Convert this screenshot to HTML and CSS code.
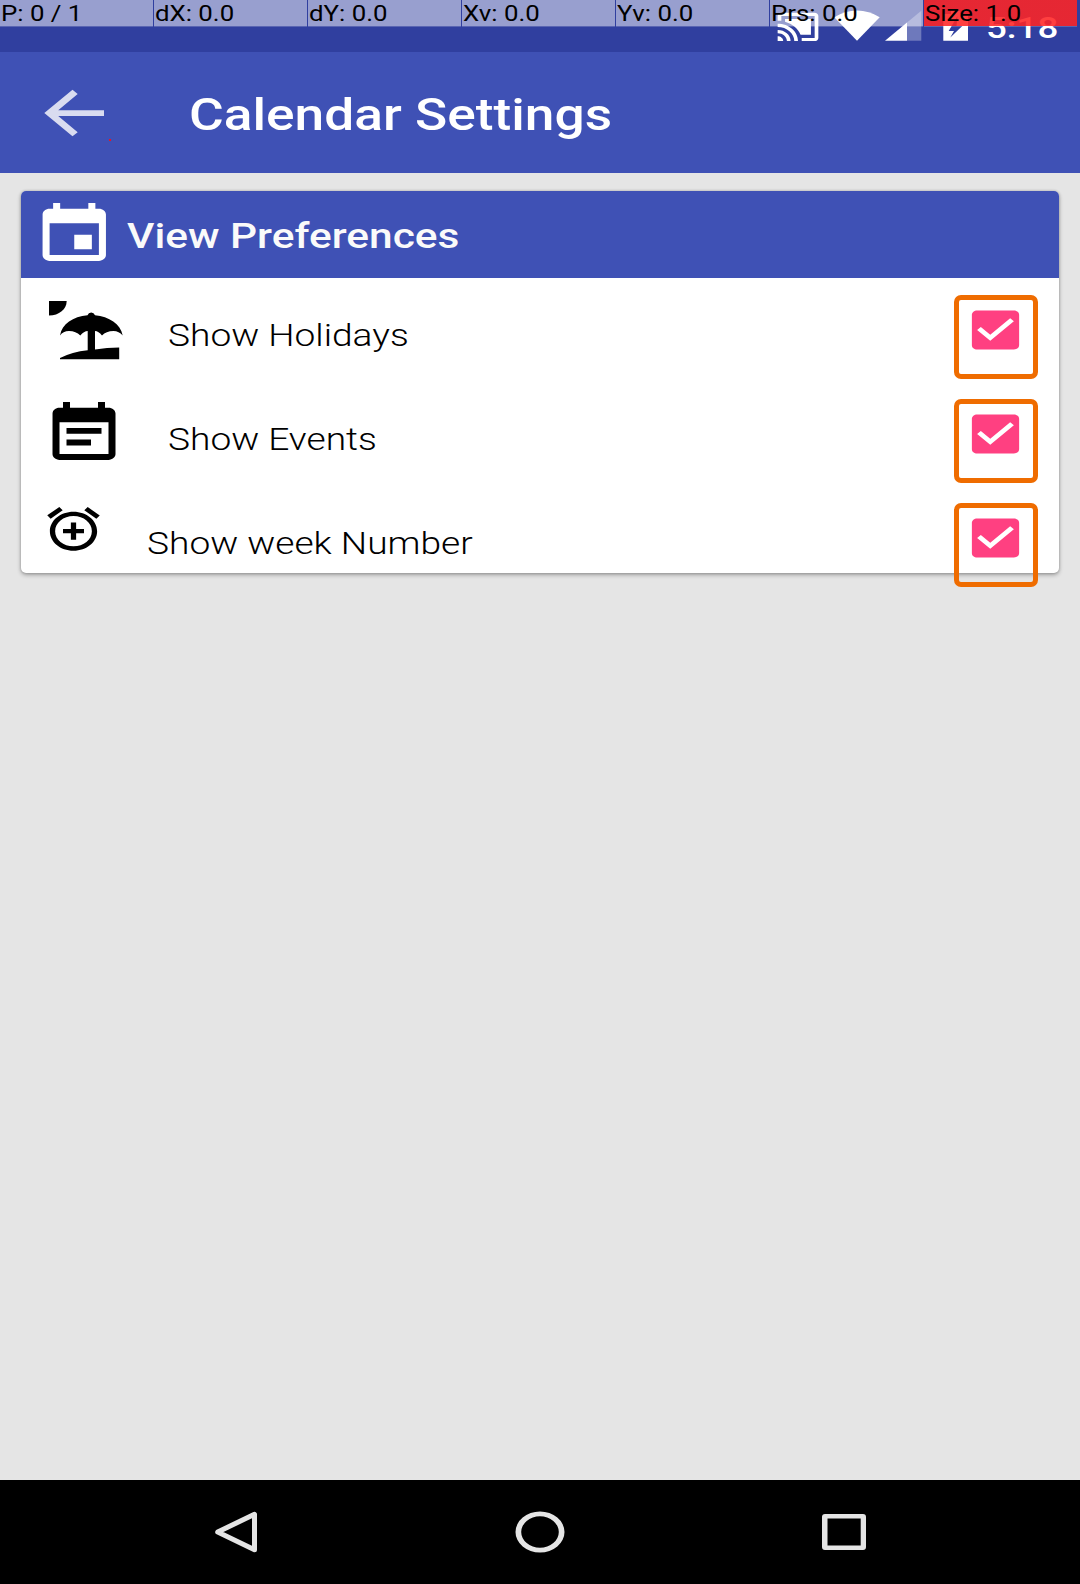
FILE: index.html
```html
<!DOCTYPE html>
<html lang="en">
<head>
<meta charset="utf-8">
<title>Calendar Settings</title>
<link rel="stylesheet" href="styles.css">
</head>
<body>
<div class="screen">
  <div class="status-bar">
    <svg class="status-icons" width="200" height="52" viewBox="774 0 200 52" fill="#fff">
      <path transform="translate(775.8 8.1) scale(1.85 1.57)" d="M1 18v3h3c0-1.66-1.34-3-3-3zm0-4v2c2.76 0 5 2.24 5 5h2c0-3.87-3.13-7-7-7zm18-7H5v1.63c3.96 1.28 7.09 4.41 8.37 8.37H19V7zM1 10v2c4.97 0 9 4.03 9 9h2c0-6.08-4.93-11-11-11zm20-7H3c-1.1 0-2 .9-2 2v3h2V5h18v14h-7v2h7c1.1 0 2-.9 2-2V5c0-1.1-.9-2-2-2z"/>
      <path d="M857 40.7 834.3 17.3Q845 10.6 857 10.6T879.7 17.3Z"/>
      <path opacity=".3" d="M907 22.5 921.3 10.7V40.7H907Z"/>
      <path d="M885 40.7 907 22.5V40.7Z"/>
      <path fill-rule="evenodd" d="M943.3 14H951V11H960V14H968V40.7H943.3ZM957.5 16 948.7 31H954L950.3 37.5 962.3 26H956.5Z"/>
    </svg>
    <span class="clock wide">5:18</span>
    <div class="pointer-info">
      <div class="cell"><span class="wide">P: 0 / 1</span></div>
      <div class="cell"><span class="wide">dX: 0.0</span></div>
      <div class="cell"><span class="wide">dY: 0.0</span></div>
      <div class="cell"><span class="wide">Xv: 0.0</span></div>
      <div class="cell"><span class="wide">Yv: 0.0</span></div>
      <div class="cell"><span class="wide">Prs: 0.0</span></div>
      <div class="cell size"><span class="wide">Size: 1.0</span></div>
    </div>
  </div>

  <header class="toolbar">
    <svg class="back" width="68" height="52" viewBox="44 87 68 52">
      <path fill="#d9dcf0" d="M44.3 113 72.5 89.8 77.7 94 58.2 110.2H104V115.9H58.2L77.7 132.2 72.5 136.3Z"/>
    </svg>
    <i class="touch-dot"></i>
    <h1 class="wide">Calendar Settings</h1>
  </header>

  <main class="content">
    <section class="card">
      <div class="card-head">
        <svg width="84.5" height="69.6" viewBox="0 0 24 24" preserveAspectRatio="none" fill="#fff"><path d="M17 12h-5v5h5v-5zM16 1v2H8V1H6v2H5c-1.11 0-1.99.9-1.99 2L3 19c0 1.1.89 2 2 2h14c1.1 0 2-.9 2-2V5c0-1.1-.9-2-2-2h-1V1h-2zm3 18H5V8h14v11z"/></svg>
        <h2 class="wide">View Preferences</h2>
      </div>
      <div class="row">
        <svg width="84" height="69" viewBox="42 295 84 69">
          <path d="M49 301H66.7C66.7 309 59 315.6 49 315.6Z"/>
          <path d="M60 335.500C62 324 73 316.500 87.500 315.300Q88.500 312.600 91.200 312.600T95 315.300C109 316.500 120.500 324 122.700 335.500Q119 331 113.500 331Q106 331 102 335.500Q98.500 331 95 331V349.500Q107 347.500 119.200 347.500V359.200H60V358Q72 352 87.700 350.300V331Q84 331 80.300 335.500Q76 331 69 331Q63 331 60 335.500Z"/>
        </svg>
        <span class="label wide">Show Holidays</span>
        <span class="check"><svg width="63" height="52" viewBox="0 0 24 24" preserveAspectRatio="none"><path d="M19 3H5c-1.11 0-2 .9-2 2v14c0 1.1.89 2 2 2h14c1.11 0 2-.9 2-2V5c0-1.1-.89-2-2-2zm-9 14l-5-5 1.41-1.41L10 14.17l7.59-7.59L19 8l-9 9z"/></svg></span>
      </div>
      <div class="row">
        <svg width="84" height="69.6" viewBox="0 0 24 24" preserveAspectRatio="none"><path d="M17 10H7v2h10v-2zm2-7h-1V1h-2v2H8V1H6v2H5c-1.11 0-1.99.9-1.99 2L3 19c0 1.1.89 2 2 2h14c1.1 0 2-.9 2-2V5c0-1.1-.9-2-2-2zm0 16H5V8h14v11zm-5-5H7v2h7v-2z"/></svg>
        <span class="label wide">Show Events</span>
        <span class="check"><svg width="63" height="52" viewBox="0 0 24 24" preserveAspectRatio="none"><path d="M19 3H5c-1.11 0-2 .9-2 2v14c0 1.1.89 2 2 2h14c1.11 0 2-.9 2-2V5c0-1.1-.89-2-2-2zm-9 14l-5-5 1.41-1.41L10 14.17l7.59-7.59L19 8l-9 9z"/></svg></span>
      </div>
      <div class="row">
        <svg width="63" height="52" viewBox="0 0 24 24" preserveAspectRatio="none"><path d="M7.88 3.39L6.6 1.86 2 5.71l1.29 1.53 4.59-3.85zM22 5.72l-4.6-3.86-1.29 1.53 4.6 3.86L22 5.72zM12 4c-4.97 0-9 4.03-9 9s4.02 9 9 9c4.97 0 9-4.03 9-9s-4.03-9-9-9zm0 16c-3.87 0-7-3.13-7-7s3.13-7 7-7 7 3.13 7 7-3.13 7-7 7zm1-11h-2v3H8v2h3v3h2v-3h3v-2h-3V9z"/></svg>
        <span class="label wide">Show week Number</span>
        <span class="check"><svg width="63" height="52" viewBox="0 0 24 24" preserveAspectRatio="none"><path d="M19 3H5c-1.11 0-2 .9-2 2v14c0 1.1.89 2 2 2h14c1.11 0 2-.9 2-2V5c0-1.1-.89-2-2-2zm-9 14l-5-5 1.41-1.41L10 14.17l7.59-7.59L19 8l-9 9z"/></svg></span>
      </div>
    </section>
  </main>

  <nav class="nav-bar">
    <svg width="48" height="44" viewBox="212 1510 48 44"><path d="M217.7 1532 254.5 1514.3V1549.7Z" stroke-width="5" stroke-linejoin="round"/></svg>
    <svg width="52" height="44" viewBox="0 0 52 44"><path fill-rule="evenodd" class="solid" d="M1.5 22a24.5 20.5 0 1 0 49 0a24.5 20.5 0 1 0-49 0ZM7.2 22a18.8 15.7 0 1 1 37.6 0a18.8 15.7 0 1 1-37.6 0Z"/></svg>
    <svg width="48" height="44" viewBox="820 1510 48 44"><path fill-rule="evenodd" class="solid" d="M825 1514H863Q866 1514 866 1517V1547Q866 1550 863 1550H825Q822 1550 822 1547V1517Q822 1514 825 1514ZM827.5 1518.5V1545.5H860.7V1518.5Z"/></svg>
  </nav>
</div>
</body>
</html>
```
FILE: styles.css
```css
* { box-sizing: border-box; }
body { margin: 0; font-family: Roboto, "Liberation Sans", sans-serif; }
svg { display: block; flex: none; }
h1, h2 { margin: 0; }

.screen {
  width: 1080px;
  height: 1584px;
  display: flex;
  flex-direction: column;
  background: #e5e5e5;
  overflow: hidden;
}

/* Glyphs are drawn wider than tall across the whole screen. */
.wide {
  display: inline-block;
  white-space: nowrap;
  transform: scaleX(1.212);
  transform-origin: left center;
}

.status-bar {
  position: relative;
  flex: none;
  height: 52px;
  display: flex;
  padding-left: 774px;
  background: #303f9f;
}
.clock {
  margin-left: 12px;
  padding-top: 10px;
  font-size: 30.3px;
  line-height: 36px;
  font-weight: 500;
  color: #fff;
}
.pointer-info {
  position: absolute;
  inset: 0 0 auto 0;
  height: 27px;
  display: flex;
  gap: 1px;
}
.cell {
  width: 153px;
  height: 26px;
  padding-left: 1px;
  background: rgba(255, 255, 255, .5);
  box-shadow: 0 1px rgba(255, 255, 255, .2);
  font-size: 21.5px;
  line-height: 28px;
  color: #000;
}
.cell .wide { transform: scaleX(1.2); }
.cell.size {
  background: linear-gradient(rgba(255, 0, 0, .753), rgba(255, 0, 0, .753)), rgba(255, 255, 255, .5);
}

.toolbar {
  flex: none;
  height: 121px;
  display: flex;
  align-items: center;
  padding-left: 44px;
  background: #3f51b5;
}
.touch-dot {
  width: 2px;
  height: 2px;
  margin: 54px 0 0 -3px;
  background: #f01020;
}
.toolbar h1 {
  margin-left: 78px;
  padding-top: 5px;
  font-size: 43.8px;
  line-height: 52px;
  font-weight: 500;
  color: #fff;
  transform: scaleX(1.216);
}

.content {
  flex: 1;
  padding: 18px 21px 0;
}
.card {
  height: 381.5px;
  border-radius: 5px;
  background: #fff;
  box-shadow: 0 2px 4px rgba(0, 0, 0, .3), 0 0 3px rgba(0, 0, 0, .2);
}
.card-head {
  height: 87px;
  display: flex;
  padding: 8.5px 0 0 10.5px;
  border-radius: 5px 5px 0 0;
  background: #3f51b5;
}
.card-head h2 {
  margin-left: 10.5px;
  padding-top: 14px;
  font-size: 34.8px;
  line-height: 44px;
  font-weight: 500;
  color: #fafafa;
  transform: scaleX(1.22);
}
.row {
  height: 87px;
  margin-top: 17px;
  padding: 0 10px 0 21px;
  display: flex;
}
.row svg { fill: #000; }
.label {
  margin-left: 42px;
  padding-top: 21px;
  font-size: 31.2px;
  line-height: 40px;
  font-weight: 300;
  color: #000;
  transform: scaleX(1.19);
}
.check {
  flex: none;
  width: 84px;
  height: 84px;
  margin-left: auto;
  margin-right: 11px;
  padding: 4px 0 0 5px;
  border: 5px solid #ef6c00;
  border-radius: 7px;
}
.row .check svg { fill: #ff4081; }

.nav-bar {
  flex: none;
  height: 104px;
  display: flex;
  align-items: center;
  justify-content: space-between;
  padding: 0 212px;
  background: #000;
}
.nav-bar svg { fill: none; stroke: #e5e5e5; }
.nav-bar .solid { fill: #e5e5e5; stroke: none; }
```
